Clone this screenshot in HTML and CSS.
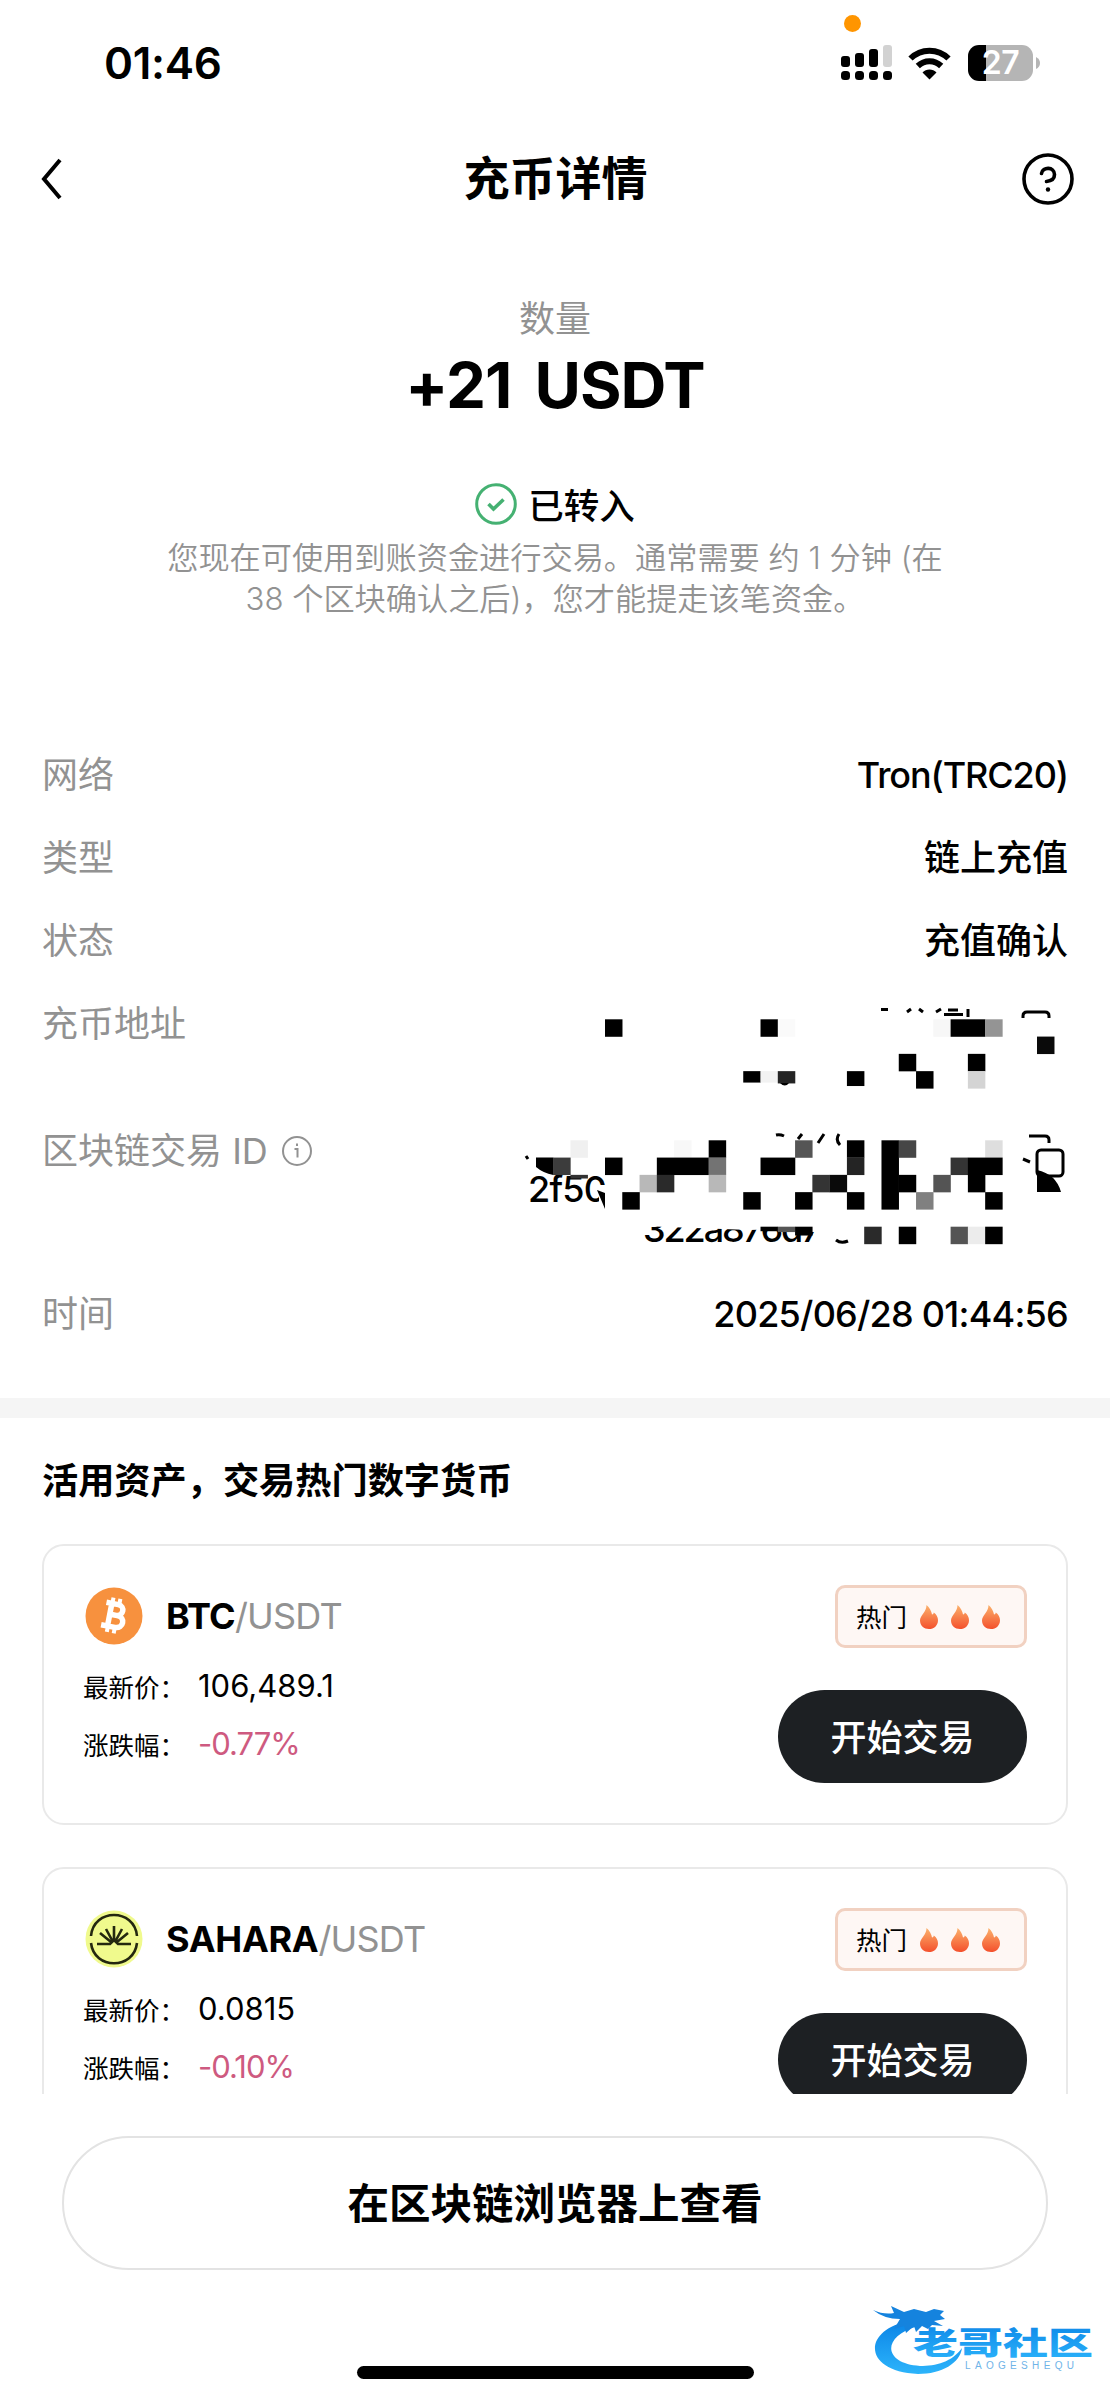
FILE: index.html
```html
<!DOCTYPE html>
<html lang="zh-CN">
<head>
<meta charset="utf-8">
<title>充币详情</title>
<link rel="stylesheet" href="styles.css">
</head>
<body>
<svg width="0" height="0" class="defs">
  <defs>
    <linearGradient id="fire" x1="0" y1="0" x2="0" y2="1"><stop offset="0" stop-color="#fbb26c"/><stop offset="1" stop-color="#f4502c"/></linearGradient>
    <linearGradient id="sea" x1="0" y1="0" x2="0" y2="1"><stop offset="0" stop-color="#0b84e6"/><stop offset="1" stop-color="#2cb4fb"/></linearGradient>
    <symbol id="flame" viewBox="0 0 18 24"><path fill="url(#fire)" d="M6.500 0C9.500 2.500 11.500 6 12 9.500C13.200 9.500 13.500 8.500 13.800 7.500C16.500 9.500 18 12 18 15.200C18 20.500 14 24 9 24S0 20.500 0 15.500C0 10.500 6.500 7 6.500 0Z"/></symbol>
  </defs>
</svg>
<header class="status">
  <span class="clock">01:46</span>
  <i class="mic-dot"></i>
  <div class="status-icons">
    <svg width="51" height="36" viewBox="0 0 51 36">
      <g><rect x="0" y="11" width="9" height="11" rx="3"/><rect x="14" y="8" width="9" height="14" rx="3"/><rect x="28" y="4" width="9" height="18" rx="3"/><rect x="42" y="0" width="9" height="22" rx="3" fill="#d2d2d2"/></g>
      <g><rect x="0" y="26" width="9" height="9" rx="3.500"/><rect x="14" y="26" width="9" height="9" rx="3.500"/><rect x="28" y="26" width="9" height="9" rx="3.500"/><rect x="42" y="26" width="9" height="9" rx="3.500"/></g>
    </svg>
    <svg class="wifi" width="43" height="33" viewBox="0 0 43 33"><g fill="none" stroke="#000" stroke-width="6"><path d="M2.500 11.500C13 1 30 1 40.500 11.500"/><path d="M9.800 19C16.500 12.500 26.500 12.500 33.200 19"/></g><path d="M21.500 32.500L14.500 25.500C18 21.500 25 21.500 28.500 25.500Z"/></svg>
    <div class="battery"><span>27</span></div>
    <svg class="nub" width="4" height="12" viewBox="0 0 4 12"><path fill="#b5b5b5" d="M0 0Q4 2 4 6T0 12Z"/></svg>
  </div>
</header>
<nav class="nav">
  <svg width="22" height="42" viewBox="0 0 22 42"><path d="M19 2L3 21L19 40" fill="none" stroke="#000" stroke-width="4"/></svg>
  <h1>充币详情</h1>
  <svg width="52" height="52" viewBox="0 0 52 52"><g fill="none" stroke="#000" stroke-width="3.600"><circle cx="26" cy="26" r="24"/><path d="M19.500 20.500C20.500 13.500 32.500 13.500 32.500 21.500C32.500 26 29 28 24.500 28.500" stroke-linecap="round"/></g><circle cx="26" cy="36.500" r="2.200"/></svg>
</nav>
<section class="hero">
  <div class="hero-label">数量</div>
  <div class="amount">+21 USDT</div>
  <div class="state"><svg width="42" height="42" viewBox="0 0 42 42" fill="none" stroke="#45b172"><circle cx="21" cy="21" r="19.300" stroke-width="3"/><path d="M13.500 21L18.500 26L28.500 16.500" stroke-width="3.600"/></svg><span>已转入</span></div>
  <p>您现在可使用到账资金进行交易。通常需要 约 1 分钟 (在<br>38 个区块确认之后)，您才能提走该笔资金。</p>
</section>
<dl class="details">
  <div class="row"><dt>网络</dt><dd class="net">Tron(TRC20)</dd></div>
  <div class="row"><dt>类型</dt><dd>链上充值</dd></div>
  <div class="row"><dt>状态</dt><dd>充值确认</dd></div>
  <div class="row address"><dt>充币地址</dt></div>
  <div class="row txid"><dt>区块链交易 ID<svg width="32" height="32" viewBox="0 0 32 32" fill="none" stroke="#929292" stroke-width="2"><circle cx="16" cy="16" r="14"/><path d="M13.500 14H16.500V22.500M16 8.500V11"/></svg></dt></div>
  <div class="row"><dt>时间</dt><dd class="time">2025/06/28 01:44:56</dd></div>
  <svg class="mosaic" width="550" height="250" viewBox="520 1000 550 250">
    <g class="hash"><text x="528" y="1202">2f50</text><text x="643" y="1242" textLength="178">322a876d7</text></g>
    <path fill="#fff" d="M599 1185H620V1215H599ZM640 1205H860V1227L750 1230L640 1226ZM811 1225H830V1232H811Z"/>
    <g fill="none" stroke="#000" stroke-width="3">
      <path d="M1023 1018V1016Q1023 1012 1027 1012H1045Q1049 1012 1049 1016V1018M1029 1136H1045Q1049 1136 1049 1140V1143"/>
      <rect x="1037" y="1150" width="26" height="26" rx="4"/>
      <path d="M776 1135Q780 1134 784 1136M798 1139L802 1134M818 1143L824 1134M839 1134Q835 1140 840 1145M1023 1159L1030 1162M526 1156L528 1159M881 1009.500H888M907 1012L911 1009M919 1009L923 1012M936 1012L941 1009M944 1014.500H963M948 1010H958M968 1009V1017"/>
      <path d="M836 1240Q841 1244 848 1241"/>
    </g>
    <g class="tiles"></g>
  </svg>
</dl>
<main class="markets">
  <h2>活用资产，交易热门数字货币</h2>
  <article class="card">
    <div class="info">
      <div class="pair"><svg width="58" height="58" viewBox="0 0 58 58"><circle cx="29" cy="29" r="28.500" fill="#f7913e"/><g transform="rotate(11 29 29)" fill="none" stroke="#fff"><path stroke-width="5.500" d="M19 17H31C38.500 17 38.500 28 31 28H24H32C41 28 41 40 32 40H18M24.500 17V40"/><path stroke-width="4" d="M25 11V17M32 11V17M25 40V46M32 40V46"/></g></svg><strong class="btc">BTC</strong><span class="quote">/USDT</span></div>
      <div class="stat"><span>最新价：</span><b class="price">106,489.1</b></div>
      <div class="stat"><span>涨跌幅：</span><b class="down">-0.77%</b></div>
    </div>
    <div class="side"><div class="hot"><span>热门</span><svg><use href="#flame"/></svg><svg><use href="#flame"/></svg><svg><use href="#flame"/></svg></div><button>开始交易</button></div>
  </article>
  <article class="card">
    <div class="info">
      <div class="pair"><svg width="58" height="58" viewBox="0 0 58 58"><circle cx="29" cy="29" r="28.500" fill="#f0fa8d"/><g fill="none" stroke="#24280f" stroke-width="2.600"><path d="M6 26C8.500-2 49.500-2 52 26M6 33C9 60 49 60 52 33M12 34H25L29 30L33 34H46M29 31V16M27.500 31L21 19M30.500 31L37 19M26 32L15 23M32 32L43 23"/></g></svg><strong class="sahara">SAHARA</strong><span class="quote">/USDT</span></div>
      <div class="stat"><span>最新价：</span><b class="price">0.0815</b></div>
      <div class="stat"><span>涨跌幅：</span><b class="down">-0.10%</b></div>
    </div>
    <div class="side"><div class="hot"><span>热门</span><svg><use href="#flame"/></svg><svg><use href="#flame"/></svg><svg><use href="#flame"/></svg></div><button>开始交易</button></div>
  </article>
</main>
<footer class="bottom">
  <button>在区块链浏览器上查看</button>
  <i class="home-bar"></i>
  <svg class="brand" width="240" height="84" viewBox="0 0 240 84">
    <path fill="url(#sea)" d="M40 20C-8 28-8 71 48 73C72 73 90 62 92 47C82 61 66 65 50 65C14 63 10 36 48 25Z"/>
    <path fill="#1583de" d="M3 9Q14 14 24 12L21 5L34 11L44 8L56 11L64 8L74 10L70 14L75 18L64 20L73 25L62 24L58 28L52 25L46 31L44 25L36 32L34 25L24 28L30 18Q14 18 3 9Z"/>
    <text class="brand-cn" transform="translate(43 53) scale(1.25 .84)" x="0" y="0" fill="url(#sea)">老哥社区</text>
    <text class="brand-en" x="95" y="67.500" textLength="109">LAOGESHEQU</text>
  </svg>
</footer>
<script src="mosaic.js"></script>
</body>
</html>
```
FILE: mosaic.js
```js
// [column, row, grey level, columns wide, rows tall] on a 17.28px grid
const size = 17.28;
const blocks = (originY, list) => list.map(([c, r, g, w = 1, h = 1]) =>
  `<rect x="${605 + c * size}" y="${originY + r * size}" width="${w * size + 0.2}" height="${h * size + 0.2}" fill="rgb(${g},${g},${g})"/>`).join('');
document.querySelector('.tiles').innerHTML =
  blocks(1019.3, [
    [0,0,0],[9,0,0],[10,0,250],[19,0,247],[20,0,0,2],[22,0,148],[25,1,10],
    [17,2,0],[21,2,0],[8,3,0,1,.65],[9,3,242,1,.65],[10,3,36,1,.7],[14,3,0,1,.85],[18,3,0],[21,3,212]
  ]) +
  blocks(1140.3, [
    [-2,0,240],[4,0,248],[6,0,0],[11,0,85],[14,0,0],[16,0,0,1,4],[17,0,70],[22,0,222],
    [-3,1,60],[0,1,0],[3,1,0,3],[6,1,115],[9,1,0,2],[14,1,36],[20,1,52],[21,1,0,2],
    [-2,2,50,1,.2],[2,2,184],[3,2,42],[6,2,184],[12,2,52],[13,2,10],[17,2,0],[19,2,84],[21,2,0],
    [1,3,0],[8,3,0],[11,3,0],[14,3,0],[18,3,128],[22,3,0],
    [9,5,0,1,.25],[10,5,85,1,.3],[11,5,0,1,.5],[15,5,42],[17,5,0],[20,5,84],[21,5,236],[22,5,0]
  ]) +
  '<path d="M536 1157.500H553.300V1175Q543 1173 536 1167ZM1037 1170Q1056 1174 1061 1192H1037ZM597 1190L605 1193V1209Z"/><path d="M780 1083H789Q785 1088 780 1083Z"/>';
```
FILE: styles.css
```css
* { box-sizing: border-box; margin: 0; padding: 0; }
body { width: 1110px; height: 2400px; overflow: hidden; background: #fff; color: #000; font-family: Inter, "Noto Sans CJK SC", sans-serif; display: flex; flex-direction: column; position: relative; }
.defs { position: absolute; }
.status { height: 126px; flex: none; padding: 0 70px 0 104px; display: flex; align-items: center; justify-content: space-between; position: relative; }
.clock { font-size: 44px; font-weight: 600; line-height: 50px; letter-spacing: -.3px; }
.mic-dot { position: absolute; left: 844px; top: 15px; width: 17px; height: 17px; border-radius: 50%; background: #ff9500; }
.status-icons { display: flex; align-items: center; }
.wifi { margin: 0 17px 0 16px; }
.battery { width: 65px; height: 36px; border-radius: 11px; background: linear-gradient(90deg, #000 18px, #b5b5b5 18px); color: #fff; text-align: center; font-size: 32px; line-height: 36px; font-weight: 600; letter-spacing: -.5px; }
.nub { margin-left: 3px; }
.nav { height: 106px; flex: none; padding: 0 36px 0 41px; display: flex; align-items: center; justify-content: space-between; }
.nav h1 { font-size: 46px; font-weight: 600; line-height: 60px; padding: 0 0 3px 26px; }
.hero { height: 498px; flex: none; padding-top: 61px; text-align: center; display: flex; flex-direction: column; align-items: center; }
.hero-label { font-size: 36px; line-height: 52px; color: #929292; }
.amount { font-size: 63.500px; line-height: 80px; font-weight: 700; letter-spacing: -1px; word-spacing: 9px; }
.state { height: 52px; margin-top: 53px; display: flex; align-items: center; gap: 11px; font-size: 35.500px; font-weight: 500; }
.state span { padding-bottom: 2px; }
.hero p { font-size: 31.200px; line-height: 41px; margin-top: 8px; color: #929292; font-weight: 350; }
.details { height: 668px; flex: none; padding: 3px 42px 0; position: relative; }
.row { height: 83px; display: flex; justify-content: space-between; align-items: center; font-size: 36px; line-height: 52px; }
dt { color: #929292; display: flex; align-items: center; gap: 13px; }
dd { font-weight: 500; }
.net { letter-spacing: -1.1px; }
.time { letter-spacing: -.75px; }
.address { height: 127px; align-items: flex-start; padding-top: 16px; }
.txid { height: 163px; align-items: flex-start; padding-top: 16px; }
.mosaic { position: absolute; left: 520px; top: 270px; }
.hash { font-size: 36px; font-weight: 500; letter-spacing: -.8px; }
.markets { height: 696px; flex: none; overflow: hidden; border-top: 20px solid #f5f5f5; padding: 36px 42px 0; }
h2 { font-size: 36.200px; line-height: 54px; font-weight: 600; margin-bottom: 36px; }
.card { height: 281px; border: 2px solid #e9e9e9; border-radius: 22px; margin-bottom: 42px; padding: 39px 39px 0; display: flex; justify-content: space-between; }
.pair { height: 62px; display: flex; align-items: center; font-size: 36px; letter-spacing: -.8px; }
.pair svg { margin: 0 23px 0 2px; }
.pair strong { font-weight: 700; }
.sahara { letter-spacing: -.3px; }
.quote { color: #929292; }
.info .pair { margin-bottom: 9px; }
.stat { height: 58px; display: flex; align-items: center; font-size: 25.500px; }
.stat span { width: 115px; padding-top: 1px; }
.stat b { font-size: 31px; font-weight: 400; }
.stat .down { color: #ce5a80; letter-spacing: -1px; }
.side { display: flex; flex-direction: column; align-items: flex-end; }
.hot { width: 192px; height: 63px; border: 3px solid #f1d1c1; border-radius: 10px; background: #fef7f4; display: flex; align-items: center; padding-left: 18px; font-size: 25.500px; }
.hot span { padding-bottom: 3px; }
.hot svg { width: 18px; height: 24px; margin-left: 13px; }
.side button { width: 249px; height: 93px; border: 0; border-radius: 47px; background: #1d2023; color: #fff; margin-top: 42px; padding-bottom: 4px; font: 500 36px Inter, "Noto Sans CJK SC", sans-serif; }
.bottom { flex: 1; position: relative; display: flex; flex-direction: column; align-items: center; padding-top: 42px; }
.bottom button { width: 986px; height: 134px; flex: none; border: 2px solid #e3e3e3; border-radius: 67px; background: #fff; color: #000; padding-bottom: 4px; font: 600 41.500px Inter, "Noto Sans CJK SC", sans-serif; }
.home-bar { width: 397px; height: 13px; border-radius: 7px; background: #000; margin-top: 96px; }
.brand { position: absolute; left: 870px; top: 207px; }
.brand-cn { font: 900 36px "Noto Sans CJK SC", sans-serif; }
.brand-en { font: 10px "Liberation Sans", sans-serif; fill: #6fb4e8; }
```
